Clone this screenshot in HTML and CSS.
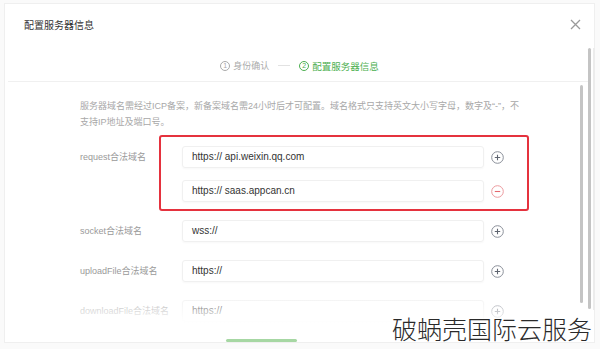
FILE: index.html
```html
<!DOCTYPE html>
<html>
<head>
    <title>配置服务器信息</title>
    <meta charset="utf-8">
    <link rel="stylesheet" href="styles.css">
</head>
<body>
    <div class="page">
        <div class="dialog">
            <div class="dialog-head">
                <h2 class="dialog-title">配置服务器信息</h2>
                <svg class="close" width="11" height="11" viewBox="0 0 11 11">
                    <path d="M1 1 L10 10 M10 1 L1 10" stroke="#9a9a9a" stroke-width="1.3" fill="none"/>
                </svg>
            </div>
            <div class="steps">
                <span class="step">
                    <span class="step-num">1</span>身份确认
                </span>
                <span class="step-line"></span>
                <span class="step active">
                    <span class="step-num">2</span>配置服务器信息
                </span>
            </div>
            <div class="dialog-body">
                <p class="tip">服务器域名需经过ICP备案，新备案域名需24小时后才可配置。域名格式只支持英文大小写字母，数字及“-”，不<br>支持IP地址及端口号。</p>

                <div class="field">
                    <label class="field-label">request合法域名</label>
                    <div class="field-values is-error">
                        <div class="field-line">
                            <div class="input">https:// api.weixin.qq.com</div>
                            <svg class="icon" width="13" height="13" viewBox="0 0 13 13">
                                <circle cx="6.5" cy="6.5" r="5.8" stroke="#8a8f99" stroke-width="1" fill="none"/>
                                <path d="M3.8 6.5 H9.2 M6.5 3.8 V9.2" stroke="#5f6570" stroke-width="1.1"/>
                            </svg>
                        </div>
                        <div class="field-line">
                            <div class="input">https:// saas.appcan.cn</div>
                            <svg class="icon" width="13" height="13" viewBox="0 0 13 13">
                                <circle cx="6.5" cy="6.5" r="5.8" stroke="#ec9a9e" stroke-width="1" fill="none"/>
                                <path d="M3.8 6.5 H9.2" stroke="#e4676e" stroke-width="1.1"/>
                            </svg>
                        </div>
                    </div>
                </div>

                <div class="field">
                    <label class="field-label">socket合法域名</label>
                    <div class="field-values">
                        <div class="field-line">
                            <div class="input">wss://</div>
                            <svg class="icon" width="13" height="13" viewBox="0 0 13 13">
                                <circle cx="6.5" cy="6.5" r="5.8" stroke="#8a8f99" stroke-width="1" fill="none"/>
                                <path d="M3.8 6.5 H9.2 M6.5 3.8 V9.2" stroke="#5f6570" stroke-width="1.1"/>
                            </svg>
                        </div>
                    </div>
                </div>

                <div class="field">
                    <label class="field-label">uploadFile合法域名</label>
                    <div class="field-values">
                        <div class="field-line">
                            <div class="input">https://</div>
                            <svg class="icon" width="13" height="13" viewBox="0 0 13 13">
                                <circle cx="6.5" cy="6.5" r="5.8" stroke="#8a8f99" stroke-width="1" fill="none"/>
                                <path d="M3.8 6.5 H9.2 M6.5 3.8 V9.2" stroke="#5f6570" stroke-width="1.1"/>
                            </svg>
                        </div>
                    </div>
                </div>

                <div class="field">
                    <label class="field-label">downloadFile合法域名</label>
                    <div class="field-values">
                        <div class="field-line">
                            <div class="input">https://</div>
                            <svg class="icon" width="13" height="13" viewBox="0 0 13 13">
                                <circle cx="6.5" cy="6.5" r="5.8" stroke="#8a8f99" stroke-width="1" fill="none"/>
                                <path d="M3.8 6.5 H9.2 M6.5 3.8 V9.2" stroke="#5f6570" stroke-width="1.1"/>
                            </svg>
                        </div>
                    </div>
                </div>
            </div>
            <div class="body-fade"></div>
            <div class="footer-btn"></div>
            <div class="scrollbar scrollbar-inner"></div>
        </div>
        <div class="scrollbar scrollbar-outer"></div>
        <div class="scroll-track"></div>
        <div class="watermark">破蜗壳国际云服务</div>
    </div>
</body>
</html>
```

FILE: styles.css
```css
body {
    margin: 0;
    background-color: #fafafa;
    font-family: "Liberation Sans", "Noto Sans CJK SC", sans-serif;
}
.page {
    position: relative;
    width: 600px;
    height: 349px;
    overflow: hidden;
}
.dialog {
    position: relative;
    margin: 3px 0 0 4px;
    width: 591px;
    height: 340px;
    box-sizing: border-box;
    background-color: #fff;
    border: 1px solid #efefef;
    overflow: hidden;
}
.dialog-head {
    display: flex;
    align-items: center;
    justify-content: space-between;
    height: 40px;
    padding: 0 13px 0 19px;
}
.dialog-title {
    margin: 0;
    font-size: 10px;
    font-weight: normal;
    color: #333;
    font-family: "Noto Sans CJK SC", sans-serif;
}
.steps {
    display: flex;
    justify-content: center;
    align-items: center;
    height: 38px;
    box-sizing: border-box;
    padding-top: 6px;
    margin: 0 3px;
    border-bottom: 1px solid #f0f0f0;
    font-family: "Noto Sans CJK SC", sans-serif;
    font-size: 9px;
    color: #aaa;
}
.step {
    display: flex;
    align-items: center;
    gap: 3px;
}
.step.active {
    color: #4caf50;
    font-size: 9.5px;
}
.step-num {
    display: flex;
    align-items: center;
    justify-content: center;
    width: 10px;
    height: 10px;
    box-sizing: border-box;
    border: 1px solid currentColor;
    border-radius: 50%;
    font-family: "Liberation Sans", sans-serif;
    font-size: 7px;
}
.step-line {
    width: 12px;
    height: 1px;
    margin: 0 9px;
    background-color: #e2e2e2;
}
.dialog-body {
    height: 244px;
    padding: 16px 0 0 75px;
    overflow: hidden;
}
.tip {
    margin: 0 0 16px;
    font-size: 9px;
    line-height: 16px;
    color: #a8a8a8;
    white-space: nowrap;
}
.field {
    display: flex;
    align-items: flex-start;
    margin-bottom: 18px;
}
.field-label {
    width: 79px;
    line-height: 22px;
    font-size: 9px;
    color: #9a9a9a;
    white-space: nowrap;
}
.field-values {
    position: relative;
    display: flex;
    flex-direction: column;
    gap: 12px;
    padding: 0 25px 0 23px;
}
.is-error::after {
    content: "";
    position: absolute;
    top: -11px;
    bottom: -9px;
    left: 0;
    right: 0;
    border: 2px solid #e5323e;
    border-radius: 3px;
}
.field-line {
    display: flex;
    align-items: center;
    gap: 7px;
}
.input {
    width: 302px;
    height: 22px;
    box-sizing: border-box;
    padding-left: 9px;
    border: 1px solid #f0f0f0;
    border-radius: 3px;
    box-shadow: 0 1px 2px rgba(0, 0, 0, 0.03);
    font-size: 10px;
    line-height: 20px;
    color: #333;
}
.body-fade {
    position: absolute;
    left: 0;
    right: 0;
    bottom: 0;
    height: 48px;
    background: linear-gradient(rgba(255, 255, 255, 0.1), rgba(255, 255, 255, 0.7) 40%, #fff 60%);
}
.footer-btn {
    position: absolute;
    left: 221px;
    bottom: 0;
    width: 71px;
    height: 3px;
    border-radius: 2px;
    background-color: #a6d7a3;
}
.scrollbar {
    position: absolute;
    width: 3px;
    border-radius: 2px;
    background-color: #c4c4c4;
}
.scrollbar-inner {
    left: 575px;
    top: 81px;
    height: 218px;
}
.scrollbar-outer {
    left: 588px;
    top: 48px;
    height: 261px;
}
.scroll-track {
    position: absolute;
    left: 593px;
    top: 48px;
    width: 2px;
    height: 262px;
    background-color: #ececec;
}
.watermark {
    position: absolute;
    left: 392px;
    top: 313px;
    font-family: "Noto Sans CJK SC", sans-serif;
    font-size: 25px;
    font-weight: 300;
    line-height: 30px;
    color: #2a2a2a;
}
```
